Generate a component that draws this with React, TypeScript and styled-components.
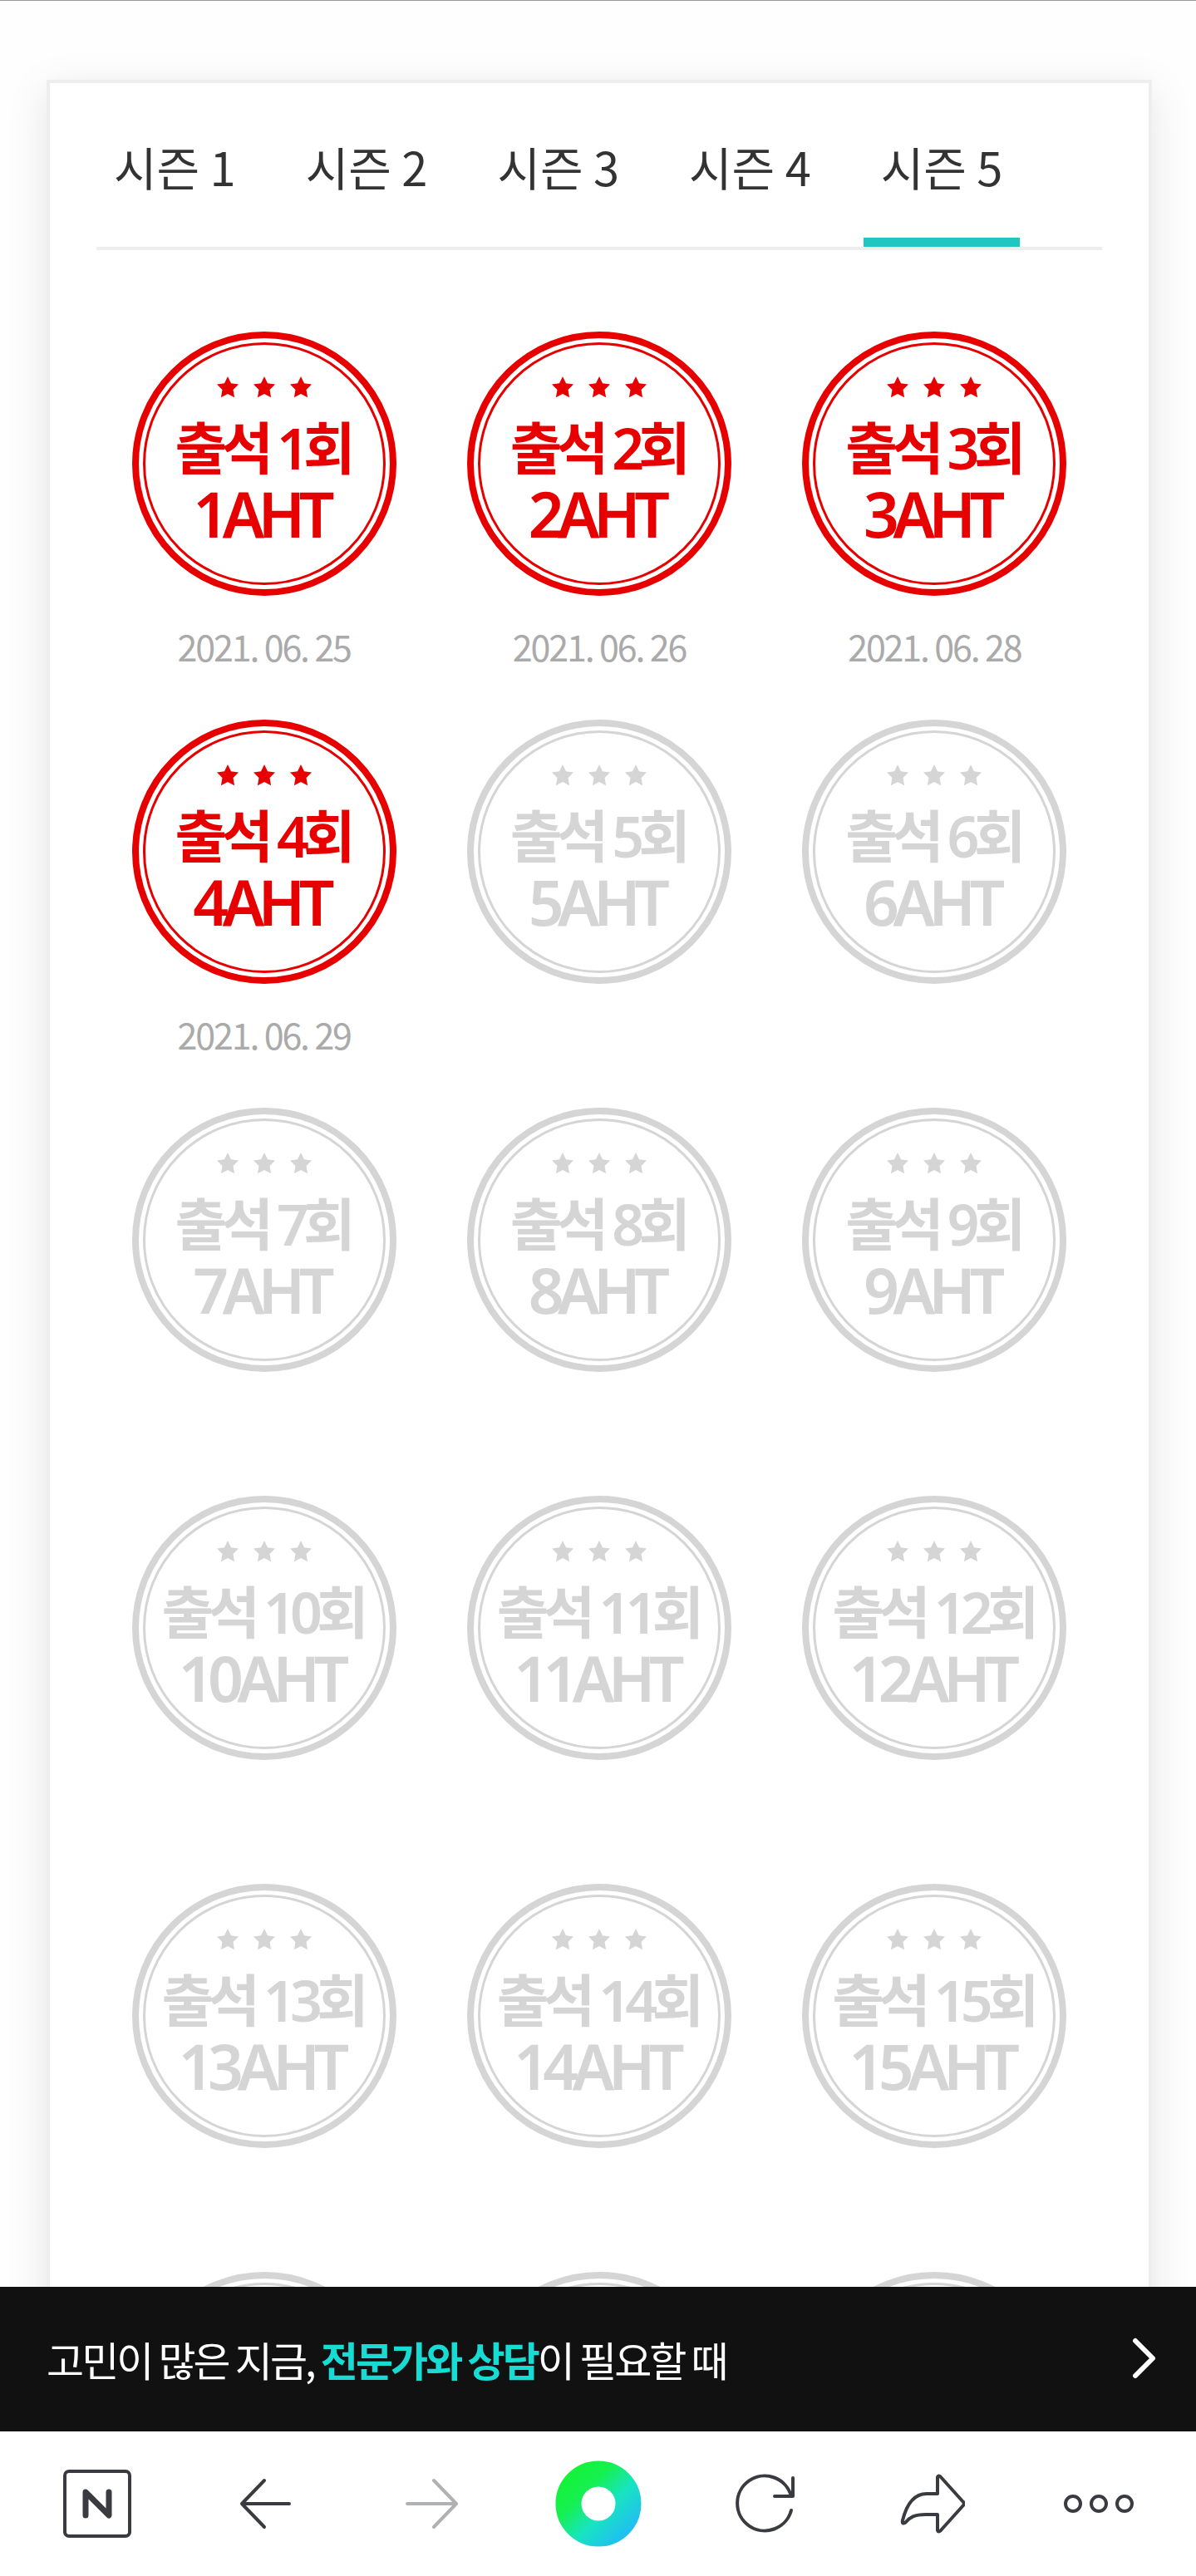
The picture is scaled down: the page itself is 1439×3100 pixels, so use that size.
import React from "react";
import styled, { createGlobalStyle, css } from "styled-components";

const GlobalStyle = createGlobalStyle`
  *, *::before, *::after { box-sizing: border-box; }
  body {
    margin: 0;
    background: #fefefe;
    color: #333;
    font-family: "Noto Sans CJK KR", sans-serif;
  }
  button { font: inherit; color: inherit; background: none; border: 0; padding: 0; cursor: pointer; }
`;

const Screen = styled.div`
  display: flex;
  flex-direction: column;
  height: 100vh;
  border-top: 1px solid #999;
`;

const Content = styled.main`
  flex: 1;
  min-height: 0;
  overflow: hidden;
  padding: 95px 53px 0 56px;
`;

const Card = styled.section`
  border: 4px solid #eee;
  padding: 0 56px 56px;
  background: #fff;
  box-shadow: 0 12px 48px rgba(0, 0, 0, 0.1);
`;

const Tabs = styled.div`
  display: flex;
  gap: 42px;
  border-bottom: 4px solid #eee;
`;

const Tab = styled.button<{ $active: boolean }>`
  padding: 60px 21px 46px;
  font-size: 56px;
  line-height: 80px;
  white-space: nowrap;
  border-bottom: 11px solid ${(p) => (p.$active ? "#20c7c0" : "transparent")};
`;

const StampGrid = styled.ul`
  display: grid;
  grid-template-columns: repeat(3, 1fr);
  grid-auto-rows: 467px;
  margin: 0;
  padding: 98px 0 0;
  list-style: none;
`;

const Cell = styled.li`
  display: flex;
  flex-direction: column;
  align-items: center;
`;

const Stamp = styled.div<{ $earned: boolean }>`
  width: 318px;
  height: 318px;
  flex: none;
  padding: 5px;
  border: 8px solid;
  border-radius: 50%;
  color: ${(p) => (p.$earned ? "#e60000" : "#d5d5d5")};
`;

const InnerRing = styled.div`
  display: flex;
  flex-direction: column;
  align-items: center;
  height: 100%;
  padding-top: 38px;
  border: 3px solid;
  border-radius: 50%;
`;

const Stars = styled.div`
  display: flex;
  gap: 18px;
  height: 26px;
  margin-bottom: 22px;
`;

const stampText = css`
  font-family: "Noto Sans", "Noto Sans CJK KR", sans-serif;
  font-weight: 600;
  letter-spacing: -0.1em;
  white-space: nowrap;
`;

const StampTitle = styled.strong`
  ${stampText}
  padding-right: 4px;
  font-size: 68px;
  line-height: 76px;
`;

const StampReward = styled.span`
  ${stampText}
  padding-right: 8px;
  font-size: 75px;
  line-height: 82px;
`;

const StampDate = styled.time`
  margin-top: 28px;
  color: #aaa;
  font-size: 43px;
  line-height: 64px;
  letter-spacing: -0.05em;
`;

const Banner = styled.a`
  display: flex;
  align-items: center;
  justify-content: space-between;
  height: 174px;
  padding: 0 48px 0 56px;
  background: #111;
  color: #fff;
  font-size: 49px;
  line-height: 72px;
  letter-spacing: -0.06em;
  text-decoration: none;
`;

const Highlight = styled.strong`
  color: #18dcd4;
  font-weight: 700;
`;

const Toolbar = styled.nav`
  display: flex;
  height: 174px;
  padding: 0 17px;
  background: #fff;
`;

const ToolButton = styled.button<{ $dim?: boolean }>`
  flex: 1;
  display: flex;
  align-items: center;
  justify-content: center;
  color: ${(p) => (p.$dim ? "#b0b1b3" : "#3a3b40")};
`;

const Icon = styled.svg<{ $weight?: number }>`
  display: block;
  fill: none;
  stroke: currentColor;
  stroke-width: ${(p) => p.$weight ?? 4};
  stroke-linecap: round;
  stroke-linejoin: round;
`;

const HeavyStroke = styled.path`
  stroke-width: 7;
`;

const Star = () => (
  <svg width="26" height="26" viewBox="0 0 26 26" fill="currentColor" aria-hidden="true">
    <path d="M13 0l4 8.3 9 1.3-6.5 6.4 1.6 9.2L13 21l-8.1 4.2 1.6-9.2L0 9.6l9-1.300z" />
  </svg>
);

interface Attendance {
  title?: string;
  reward?: string;
  date?: string;
}

const dates = ["2021. 06. 25", "2021. 06. 26", "2021. 06. 28", "2021. 06. 29"];

const attendances: Attendance[] = [
  ...Array.from({ length: 15 }, (_, i) => ({
    title: `출석 ${i + 1}회`,
    reward: `${i + 1}AHT`,
    date: dates[i],
  })),
  {},
  {},
  {},
];

const seasons = [1, 2, 3, 4, 5];

function AttendanceStamp({ title, reward, date }: Attendance) {
  return (
    <Cell>
      <Stamp $earned={Boolean(date)}>
        <InnerRing>
          {title && (
            <>
              <Stars>
                <Star />
                <Star />
                <Star />
              </Stars>
              <StampTitle>{title}</StampTitle>
              <StampReward>{reward}</StampReward>
            </>
          )}
        </InnerRing>
      </Stamp>
      {date && <StampDate>{date}</StampDate>}
    </Cell>
  );
}

export default function App() {
  const [season, setSeason] = React.useState(5);
  return (
    <>
      <GlobalStyle />
      <Screen>
        <Content>
          <Card>
            <Tabs role="tablist">
              {seasons.map((n) => (
                <Tab
                  key={n}
                  type="button"
                  role="tab"
                  aria-selected={n === season}
                  $active={n === season}
                  onClick={() => setSeason(n)}
                >
                  시즌 {n}
                </Tab>
              ))}
            </Tabs>
            <StampGrid>
              {attendances.map((a, i) => (
                <AttendanceStamp key={i} {...a} />
              ))}
            </StampGrid>
          </Card>
        </Content>
        <Banner href="#consult">
          <span>
            고민이 많은 지금, <Highlight>전문가와 상담</Highlight>이 필요할 때
          </span>
          <Icon $weight={6} width="30" height="52" viewBox="0 0 30 52">
            <path d="M5 4l21 21L5 46" />
          </Icon>
        </Banner>
        <Toolbar>
          <ToolButton type="button" aria-label="Naver">
            <Icon width="82" height="82" viewBox="0 0 82 82">
              <rect x="2" y="2" width="78" height="78" rx="5" />
              <HeavyStroke d="M27 55V27l28 28V27" />
            </Icon>
          </ToolButton>
          <ToolButton type="button" aria-label="Back">
            <Icon width="64" height="64" viewBox="-3 0 64 64">
              <path d="M59 32H2M29 4L2 32l27 28" />
            </Icon>
          </ToolButton>
          <ToolButton type="button" aria-label="Forward" $dim>
            <Icon width="64" height="64" viewBox="0 0 64 64">
              <path d="M3 32h59M35 4l27 28-27 28" />
            </Icon>
          </ToolButton>
          <ToolButton type="button" aria-label="Home">
            <Icon $weight={31} width="104" height="104" viewBox="0 0 104 104">
              <defs>
                <linearGradient id="dot" x1="0.05" y1="0.05" x2="0.98" y2="0.98">
                  <stop offset="0" stopColor="#14f23c" />
                  <stop offset="0.25" stopColor="#16f050" />
                  <stop offset="0.6" stopColor="#18e4c0" />
                  <stop offset="1" stopColor="#20c0f0" />
                </linearGradient>
              </defs>
              <circle cx="52" cy="52" r="36" stroke="url(#dot)" style={{ stroke: "url(#dot)" }} />
            </Icon>
          </ToolButton>
          <ToolButton type="button" aria-label="Reload">
            <Icon width="74" height="74" viewBox="0 0 74 74">
              <path d="M69 45A33 33 0 1 1 69 28M71 6v22H49" />
            </Icon>
          </ToolButton>
          <ToolButton type="button" aria-label="Share">
            <Icon width="80" height="72" viewBox="-3 0 80 72">
              <path d="M44 4Q45 1 48 4L75 34Q77 36 75 38L48 68Q45 71 44 68V49H30C16 49 11 52 5 59Q1 61 2 56C7 36 16 24 31 24H44z" />
            </Icon>
          </ToolButton>
          <ToolButton type="button" aria-label="More">
            <Icon width="86" height="26" viewBox="0 0 86 26">
              <circle cx="12" cy="13" r="9" />
              <circle cx="43" cy="13" r="9" />
              <circle cx="74" cy="13" r="9" />
            </Icon>
          </ToolButton>
        </Toolbar>
      </Screen>
    </>
  );
}
